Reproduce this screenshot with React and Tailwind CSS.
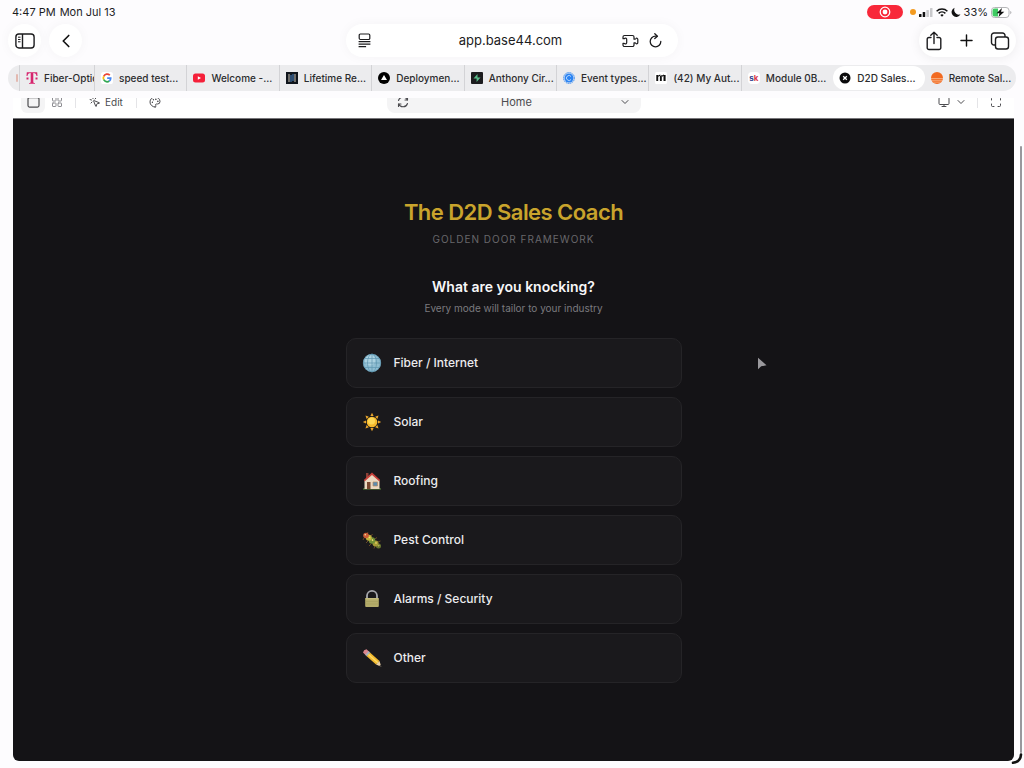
import React from "react";
import {
  ChevronDown,
  ChevronLeft,
  LayoutGrid,
  Maximize,
  Monitor,
  MousePointerClick,
  Palette,
  Plus,
} from "lucide-react";

/* ---------- favicons ---------- */

const Telekom = () => (
  <svg viewBox="0 0 12 12" className="h-3 w-3 shrink-0" fill="#d6246e">
    <path d="M.8.3h10.4l.3 3.7h-1C10.300 2 9.300 1 7.300 1v8.500c0 1 .4 1.500 1.700 1.600v.6H3v-.6c1.300-.1 1.700-.6 1.700-1.600V1C2.700 1 1.700 2 1.500 4h-1z" />
    <rect x=".5" y="5.500" width="2" height="2" />
    <rect x="9.500" y="5.500" width="2" height="2" />
  </svg>
);

const Google = () => (
  <svg viewBox="0 0 14 14" className="h-3 w-3 shrink-0">
    <rect width="14" height="14" rx="3" fill="#fff" />
    <g fill="none" strokeWidth="2">
      <path d="M10.300 3.800A4.300 4.300 0 0 0 3.200 5.100" stroke="#ea4335" />
      <path d="M3.200 5.100a4.300 4.300 0 0 0 0 3.900" stroke="#fbbc05" />
      <path d="M3.200 9a4.300 4.300 0 0 0 6.500 1.500" stroke="#34a853" />
      <path d="M9.700 10.500A4.300 4.300 0 0 0 11.300 7.200H7.200" stroke="#4285f4" />
    </g>
  </svg>
);

const Youtube = () => (
  <svg viewBox="0 0 12 12" className="h-3 w-3 shrink-0">
    <rect y="1.500" width="12" height="9" rx="2.500" fill="#f5203a" />
    <path d="M4.800 4.200v3.600L8 6z" fill="#fff" />
  </svg>
);

const Lifetime = () => (
  <svg viewBox="0 0 12 12" className="h-3 w-3 shrink-0">
    <rect width="12" height="12" fill="#10151c" />
    <path d="M3 2v8M9 2v8" stroke="#cfc8b8" />
    <path d="M5 3v7M7 2v7" stroke="#4a86c8" />
  </svg>
);

const Vercel = () => (
  <svg viewBox="0 0 12 12" className="h-3 w-3 shrink-0">
    <circle cx="6" cy="6" r="6" fill="#000" />
    <path d="M6 3l3 5H3z" fill="#fff" />
  </svg>
);

const Supabase = () => (
  <svg viewBox="0 0 12 12" className="h-3 w-3 shrink-0">
    <rect width="12" height="12" rx="1" fill="#1c1c1e" />
    <path d="M6.500 2v3.500h3L5.600 10V6.600H2.500z" fill="#5bbd8b" />
  </svg>
);

const Calendly = () => (
  <svg viewBox="0 0 12 12" className="h-3 w-3 shrink-0" fill="none">
    <circle cx="6" cy="6" r="5.400" stroke="#3c8df0" strokeDasharray="1.500 .5" />
    <circle cx="6" cy="6" r="4.500" fill="#2b83f2" />
    <path d="M8 4.500A2.500 2.500 0 1 0 8 7.500" stroke="#b5d8ff" />
  </svg>
);

const Manychat = () => (
  <svg viewBox="0 0 12 12" className="h-3 w-3 shrink-0">
    <rect width="12" height="12" rx="1.500" fill="#fff" />
    <path d="M1.300 3h1.900v6H1.300zM4.900 4.300L6.800 3v6H4.900zM8.500 3h2.100v6H8.500z" fill="#111" />
    <path d="M3 4.200L5.400 3M6.800 4.200L9 3" stroke="#111" strokeWidth="1.100" />
  </svg>
);

const Skool = () => (
  <span className="flex h-3 w-3 shrink-0 items-center justify-center rounded-sm bg-white text-[8px] font-bold leading-none">
    <span className="text-[#30418f]">s</span>
    <span className="text-[#d9364a]">k</span>
  </span>
);

const Base = () => (
  <svg viewBox="0 0 12 12" className="h-3 w-3 shrink-0">
    <circle cx="6" cy="6" r="5.500" fill="#0b0b0c" />
    <path d="M4.200 4.200l3.600 3.600M7.800 4.200L4.200 7.800" stroke="#fff" strokeWidth="1.300" />
  </svg>
);

const Remote = () => (
  <svg viewBox="0 0 12 12" className="h-3 w-3 shrink-0">
    <circle cx="6" cy="6" r="6" fill="#f26a21" />
    <path d="M0 6.500h12M.6 8.300h10.800M2 10.100h8" stroke="#fbd0ad" strokeWidth=".6" />
  </svg>
);

const tabs = [
  { title: "speed test...", icon: Google },
  { title: "Welcome -...", icon: Youtube },
  { title: "Lifetime Re...", icon: Lifetime },
  { title: "Deploymen...", icon: Vercel },
  { title: "Anthony Cir...", icon: Supabase },
  { title: "Event types...", icon: Calendly },
  { title: "(42) My Aut...", icon: Manychat },
  { title: "Module 0B...", icon: Skool },
  { title: "D2D Sales...", icon: Base, active: true },
  { title: "Remote Sal...", icon: Remote },
];

/* ---------- industry icons ---------- */

const Globe = () => (
  <svg viewBox="0 0 20 20" className="h-5 w-5 shrink-0">
    <circle cx="10" cy="10" r="9" fill="#8ebdd2" />
    <circle cx="8" cy="7" r="5.500" fill="#b4d7e5" opacity=".8" />
    <g fill="none" stroke="#5e96b0" strokeWidth=".7">
      <circle cx="10" cy="10" r="8.700" />
      <ellipse cx="10" cy="10" rx="4.500" ry="9" />
      <path d="M10 1v18M1 10h18M2.500 5.500h15M2.500 14.500h15" />
    </g>
  </svg>
);

const Sun = () => (
  <svg viewBox="0 0 20 20" className="h-5 w-5 shrink-0">
    <g fill="#e9a52c">
      {[0, 45, 90, 135, 180, 225, 270, 315].map((a) => (
        <path key={a} d="M8.400 4L10 .8 11.600 4z" transform={`rotate(${a} 10 10)`} />
      ))}
    </g>
    <circle cx="10" cy="10" r="5.300" fill="#f6b92c" />
    <circle cx="9.500" cy="9" r="3.500" fill="#fdd755" />
  </svg>
);

const House = () => (
  <svg viewBox="0 0 20 20" className="h-5 w-5 shrink-0">
    <path d="M1 17.500q9-1.500 18 0v1H1z" fill="#5f8a3c" />
    <path d="M4 2h2.500v5H4z" fill="#8c4036" />
    <path d="M2.500 9.500L10 3l7.500 6.500V18h-15z" fill="#ead9c1" />
    <path d="M10 1.500L1.800 9l1 1.200L10 4l7.200 6.200 1-1.200z" fill="#c8403a" />
    <path d="M5 11h3.500v7H5z" fill="#78472f" />
    <path d="M11 11h4.500v4H11z" fill="#5b8db0" stroke="#b58a61" strokeWidth=".7" />
  </svg>
);

const Caterpillar = () => (
  <svg viewBox="0 0 20 20" className="h-5 w-5 shrink-0">
    <path d="M2 8l-1 2M6 11l-2 2M9 14l-2 2M13 16l-1 2.500M5 4l1-2M9 6l1.500-2M13 9l2-1.500M16 12l2.500-1" stroke="#7b552b" strokeWidth=".8" />
    <circle cx="16.500" cy="16" r="2.500" fill="#67752e" />
    <circle cx="13.500" cy="13.500" r="3" fill="#a49c35" />
    <circle cx="10" cy="10.500" r="3.200" fill="#6f8f36" />
    <circle cx="6.800" cy="7.800" r="3" fill="#c3b43d" />
    <circle cx="4" cy="5.500" r="2.800" fill="#cc5c36" />
    <path d="M7 7l1 1M10 9.500l1 1.200M13.500 12.500l1 1M16.500 15.500l.6.6" stroke="#f3df73" strokeWidth="1.400" />
    <circle cx="3.300" cy="4.800" r=".8" fill="#f6e3a0" />
  </svg>
);

const Padlock = () => (
  <svg viewBox="0 0 20 20" className="h-5 w-5 shrink-0">
    <path d="M5 10V6.800a5 5 0 0 1 10 0V10" fill="none" stroke="#a7a8ad" strokeWidth="1.800" />
    <rect x="3.200" y="9" width="13.600" height="9" rx="1" fill="#b4ac6a" />
    <path d="M3.200 9.800h13.600" stroke="#d2ca8b" strokeWidth=".8" />
    <path d="M3.200 12.500h13.600M3.200 15h13.600" stroke="#a29a5a" strokeWidth=".5" />
  </svg>
);

const Pencil = () => (
  <svg viewBox="0 0 20 20" className="h-5 w-5 shrink-0">
    <path d="M1 4.500Q1.500 1.800 4.500 1.200L7.500 4 4 7.500z" fill="#db858c" />
    <path d="M3.200 6.700L6.700 3.200 8.500 5 5 8.500z" fill="#a8b2b8" />
    <path d="M4.700 8.200L8.200 4.700 17.500 13 14 16.500z" fill="#f1b92f" />
    <path d="M6.500 6.500l9.300 8.300" stroke="#ffdb62" strokeWidth="1.400" />
    <path d="M14 16.500l3.500-3.500 1.800 5.800z" fill="#ecd0a4" />
    <path d="M17.200 18l1.500-1.300.6 2.200z" fill="#2b2b2d" />
  </svg>
);

const industries = [
  { name: "Fiber / Internet", icon: Globe },
  { name: "Solar", icon: Sun },
  { name: "Roofing", icon: House },
  { name: "Pest Control", icon: Caterpillar },
  { name: "Alarms / Security", icon: Padlock },
  { name: "Other", icon: Pencil },
];

/* ---------- browser chrome ---------- */

function StatusBar() {
  return (
    <div className="flex h-6 items-center justify-between px-3 text-[11px] text-[#1c1c1e]">
      <div className="flex gap-1">
        <span>4:47 PM</span>
        <span>Mon Jul 13</span>
      </div>
      <div className="flex items-center gap-[3px]">
        <span className="mr-1 flex h-[14px] w-9 items-center justify-center rounded-full bg-[#f8283a]">
          <svg viewBox="0 0 12 12" className="h-3 w-3">
            <circle cx="6" cy="6" r="4.800" fill="none" stroke="#fff" strokeWidth="1.200" />
            <circle cx="6" cy="6" r="2.400" fill="#fff" />
          </svg>
        </span>
        <span className="h-[6px] w-[6px] rounded-full bg-[#f39a1f]" />
        <svg viewBox="0 0 14 9" className="h-[9px] w-[14px]">
          <rect x="0" y="6" width="2.500" height="3" rx=".5" fill="#111" />
          <rect x="3.700" y="4" width="2.500" height="5" rx=".5" fill="#111" />
          <rect x="7.400" y="2" width="2.500" height="7" rx=".5" fill="#c9c9cc" />
          <rect x="11" y="0" width="2.500" height="9" rx=".5" fill="#c9c9cc" />
        </svg>
        <svg viewBox="0 0 12 9" className="h-[9px] w-3" fill="none" stroke="#111" strokeWidth="1.500">
          <path d="M.6 3.200a7.800 7.800 0 0 1 10.800 0M2.600 5.400a4.900 4.900 0 0 1 6.800 0" />
          <path d="M6 8.700L4.300 7a2.500 2.500 0 0 1 3.400 0z" fill="#111" stroke="none" />
        </svg>
        <svg viewBox="0 0 10 10" className="h-[10px] w-[10px]" fill="#111">
          <path d="M3.700.8a4.700 4.700 0 1 0 5.800 6.500A4.700 4.700 0 0 1 3.700.8z" />
        </svg>
        <span>33%</span>
        <svg viewBox="0 0 21 11" className="h-[11px] w-[21px]">
          <rect x=".5" y=".5" width="17.500" height="10" rx="3" fill="#fff" stroke="#b5b5b8" />
          <path d="M3.500 1.500H7v8H3.500a2 2 0 0 1-2-2v-4a2 2 0 0 1 2-2z" fill="#3fcb63" />
          <path d="M11 1L5.500 6.300h3L7.500 10l5.800-5.300H10z" fill="#111" />
          <path d="M19.200 4v3.200q1.200-.4 1.200-1.600T19.200 4z" fill="#b5b5b8" />
        </svg>
      </div>
    </div>
  );
}

function NavBar() {
  return (
    <div className="grid h-[41px] grid-cols-[1fr_332px_1fr] items-start px-2">
      <div className="flex gap-2">
        <button aria-label="Sidebar" className="flex h-[33px] w-[33px] items-center justify-center rounded-full bg-white shadow-[0_0_12px_rgba(0,0,0,0.04)]">
          <svg viewBox="0 0 20 16" className="h-4 w-5" fill="none" stroke="#1c1c1e" strokeWidth="1.400">
            <rect x=".9" y="1" width="18.200" height="14" rx="3" />
            <path d="M7.500 1v14" />
            <path d="M3 4.200h2.500M3 6.500h2.500M3 8.800h2.500" strokeWidth="1" />
          </svg>
        </button>
        <button aria-label="Back" className="flex h-[33px] w-[33px] items-center justify-center rounded-full bg-white shadow-[0_0_12px_rgba(0,0,0,0.04)]">
          <ChevronLeft className="h-[22px] w-[22px] text-[#111]" strokeWidth={1.800} />
        </button>
      </div>

      <div className="flex h-[33px] items-center rounded-full bg-white px-3 shadow-[0_0_12px_rgba(0,0,0,0.04)]">
        <button aria-label="Page menu">
          <svg viewBox="0 0 13 15" className="h-[15px] w-[13px]" fill="none" stroke="#1c1c1e" strokeWidth="1.200">
            <rect x="1.200" y="1" width="10.600" height="5.500" rx="1.200" />
            <path d="M.6 8.700h11.800M.6 11.200h11.800M.6 13.700h7.500" />
          </svg>
        </button>
        <input
          aria-label="Address"
          defaultValue="app.base44.com"
          className="ml-7 min-w-0 flex-1 bg-transparent text-center text-[13px] text-[#1c1c1e] outline-none"
        />
        <button aria-label="Extensions">
          <svg viewBox="0 0 17 14" className="h-[14px] w-[17px]" fill="none" stroke="#1c1c1e" strokeWidth="1.200" strokeLinejoin="round">
            <path d="M2.500 1.500h8A1.500 1.500 0 0 1 12 3v2.200h1q.5 0 1-.7c.4-.6 1.800-.4 1.800 1v3c0 1.400-1.400 1.600-1.800 1q-.5-.7-1-.7h-1V11a1.500 1.500 0 0 1-1.500 1.500h-8A1.500 1.500 0 0 1 1 11V9.300h1q.5 0 1 .4c.7.500 1.700 0 1.700-1.200v-3c0-1.200-1-1.700-1.700-1.200q-.5.4-1 .4H1V3a1.500 1.500 0 0 1 1.500-1.500z" />
          </svg>
        </button>
        <button aria-label="Reload" className="ml-[10px] mr-1">
          <svg viewBox="0 0 13 15" className="h-[15px] w-[13px]" fill="none" stroke="#1c1c1e" strokeWidth="1.300" strokeLinecap="round" strokeLinejoin="round">
            <path d="M8 3.200H6.500A5.300 5.300 0 1 0 11.800 8.500" />
            <path d="M5.800.8l2.600 2.400-2.600 2.400" />
          </svg>
        </button>
      </div>

      <div className="flex h-[33px] items-center gap-[14px] justify-self-end rounded-full bg-white px-[6px] shadow-[0_1px_12px_rgba(0,0,0,0.07)]">
        <button aria-label="Share">
          <svg viewBox="0 0 18 20" className="h-5 w-[18px]" fill="none" stroke="#1c1c1e" strokeWidth="1.400" strokeLinecap="round" strokeLinejoin="round">
            <path d="M6 6.500H4A1.800 1.800 0 0 0 2.200 8.300v8.400A1.800 1.800 0 0 0 4 18.500h10a1.800 1.800 0 0 0 1.800-1.800V8.300A1.800 1.800 0 0 0 14 6.500h-2" />
            <path d="M9 12.500V1.200M5.800 4.200L9 1.200l3.200 3" />
          </svg>
        </button>
        <button aria-label="New tab">
          <Plus className="h-[19px] w-[19px] text-[#111]" strokeWidth={1.800} />
        </button>
        <button aria-label="All tabs">
          <svg viewBox="0 0 20 18" className="h-[18px] w-5" fill="none" stroke="#1c1c1e" strokeWidth="1.400">
            <rect x="5.500" y="5" width="13" height="12" rx="2.500" />
            <path d="M5.500 13H4a2.500 2.500 0 0 1-2.500-2.500V3.500A2.500 2.500 0 0 1 4 1h8.500A2.500 2.500 0 0 1 15 3.500V5" />
          </svg>
        </button>
      </div>
    </div>
  );
}

function TabBar() {
  return (
    <div
      role="tablist"
      className="mx-2 flex h-[26px] overflow-hidden rounded-full bg-[#ececee] text-[10px] font-medium text-[#2c2c2e]"
    >
      <span className="flex w-3 shrink-0 items-center justify-end border-r border-[#d3d3d6] pr-[1px]">
        <span className="h-2 w-[2px] rounded-full bg-[#e3b9b0]" />
      </span>
      <button role="tab" className="flex w-[74px] shrink-0 items-center gap-[6px] overflow-hidden whitespace-nowrap pl-[6px]">
        <Telekom />
        <span>Fiber-Optic</span>
      </button>
      {tabs.map(({ title, icon: Icon, active }, i) => (
        <button
          key={title}
          role="tab"
          aria-selected={!!active}
          className={
            active
              ? "my-[1px] flex min-w-0 flex-1 items-center gap-[6px] whitespace-nowrap rounded-full bg-white pl-[6px]"
              : i === 9
                ? "flex min-w-0 flex-1 items-center gap-[6px] whitespace-nowrap pl-[6px]"
                : "flex min-w-0 flex-1 items-center gap-[6px] whitespace-nowrap border-l border-[#d3d3d6] pl-[6px]"
          }
        >
          <Icon />
          <span>{title}</span>
        </button>
      ))}
    </div>
  );
}

function EditorBar() {
  return (
    /* the upper part is scrolled under the tab bar */
    <div className="mt-[7px] flex h-5 items-end overflow-hidden bg-white text-[#4b4b4f]">
      <div className="grid h-8 w-full shrink-0 grid-cols-[1fr_254px_1fr] items-center">
        <div className="flex items-center">
          <button aria-label="Preview" className="ml-2 flex h-[22px] w-6 items-center justify-center rounded-md bg-[#f4f4f5]">
            <svg viewBox="0 0 13 11" className="h-[11px] w-[13px]" fill="none" stroke="currentColor" strokeWidth="1.200">
              <rect x="1" y=".6" width="11" height="9.500" rx="1.500" />
            </svg>
          </button>
          <button aria-label="Dashboard" className="ml-[6px]">
            <LayoutGrid className="h-3 w-3 text-[#8d8d92]" />
          </button>
          <span className="ml-3 h-3 w-px bg-[#e4e4e7]" />
          <button className="ml-[13px] flex items-center gap-1 text-[10px]">
            <MousePointerClick className="h-3 w-3" />
            Edit
          </button>
          <span className="ml-[13px] h-3 w-px bg-[#e4e4e7]" />
          <button aria-label="Theme" className="ml-3">
            <Palette className="h-3 w-3" />
          </button>
        </div>

        <div className="flex h-[22px] items-center rounded-lg bg-[#f4f4f5] px-[10px]">
          <button aria-label="Refresh">
            <svg viewBox="0 0 12 12" className="h-3 w-3" fill="none" stroke="currentColor" strokeWidth="1.100" strokeLinecap="round" strokeLinejoin="round">
              <path d="M1.500 4.500A4.700 4.700 0 0 1 10.300 4M10.500 7.500A4.700 4.700 0 0 1 1.700 8" />
              <path d="M10.500 1.500V4H8M1.500 10.500V8H4" />
            </svg>
          </button>
          <select
            aria-label="Page"
            className="ml-[6px] min-w-0 flex-1 appearance-none bg-transparent text-center text-[11px] [text-align-last:center]"
          >
            <option>Home</option>
          </select>
          <ChevronDown className="h-3 w-3" />
        </div>

        <div className="flex items-center justify-end pr-3">
          <button aria-label="Device" className="flex items-center gap-[5px]">
            <Monitor className="h-3 w-3" />
            <ChevronDown className="h-3 w-3" />
          </button>
          <span className="ml-[10px] mr-3 h-3 w-px bg-[#e4e4e7]" />
          <button aria-label="Full screen">
            <Maximize className="h-3 w-3" />
          </button>
        </div>
      </div>
    </div>
  );
}

/* ---------- app preview ---------- */

function Coach() {
  return (
    <main className="flex flex-1 flex-col items-center justify-center rounded-b-md bg-[#141316] px-4 py-6">
      <h1 className="text-[22px] font-semibold leading-7 tracking-tight text-[#c9a42c]">
        The D2D Sales Coach
      </h1>
      <p className="mt-[5px] text-[10px] uppercase leading-4 tracking-widest text-[#68676b]">
        Golden Door Framework
      </p>
      <h2 className="mt-[30px] text-[14px] font-semibold leading-5 text-[#f7f7f8]">
        What are you knocking?
      </h2>
      <p className="mt-[3px] text-[10px] leading-4 text-[#7b7a7f]">
        Every mode will tailor to your industry
      </p>
      <div className="mt-[22px] flex w-full max-w-[336px] flex-col gap-[9px]">
        {industries.map(({ name, icon: Icon }) => (
          <button
            key={name}
            className="flex h-[50px] items-center gap-3 rounded-[10px] border border-[#252427] bg-[#1a191c] px-[15px] text-left text-[12px] font-medium text-[#ececee]"
          >
            <Icon />
            {name}
          </button>
        ))}
      </div>
    </main>
  );
}

export default function App() {
  return (
    <div className="relative flex min-h-screen flex-col bg-[#fdfcfe] font-['Inter',sans-serif]">
      <StatusBar />
      <NavBar />
      <TabBar />
      <div className="ml-[13px] mr-[10px] mb-[7px] flex flex-1 flex-col">
        <EditorBar />
        <div className="h-px bg-[#77767a]" />
        <Coach />
      </div>

      {/* scroll thumb */}
      <div className="absolute bottom-[15px] right-[2px] top-[146px] w-[2px] rounded-full bg-[#99989d]" />
      {/* window resize corner */}
      <svg viewBox="0 0 14 14" className="absolute bottom-[2px] right-0 h-[14px] w-[14px]" fill="none">
        <path d="M11 2.500Q10.500 10 3 10.800" stroke="#111" strokeWidth="2.600" strokeLinecap="round" />
      </svg>
      {/* pointer */}
      <svg viewBox="0 0 10 13" className="absolute left-[757px] top-[357px] h-[13px] w-[10px]">
        <path d="M1 .8v11.500l3.200-3 5.300-1z" fill="#9a999d" />
      </svg>
    </div>
  );
}
